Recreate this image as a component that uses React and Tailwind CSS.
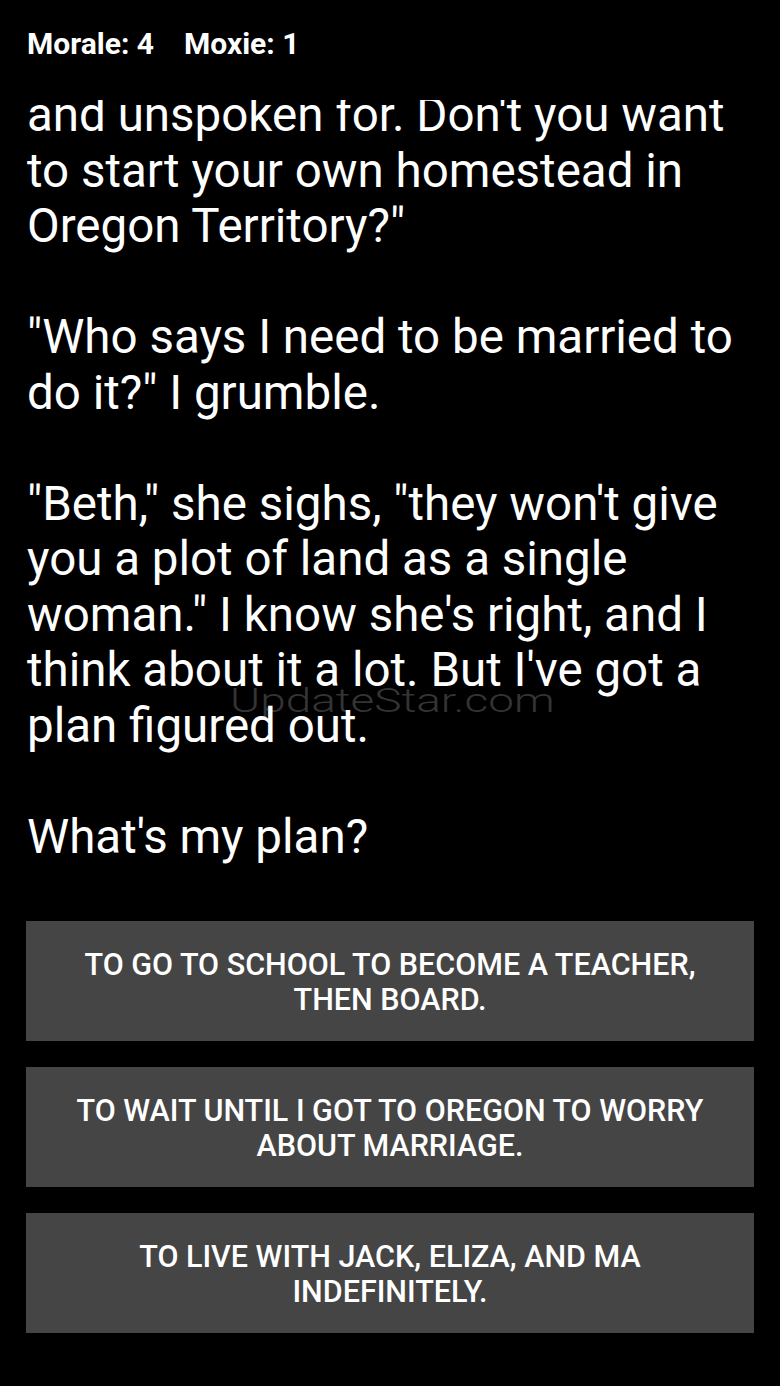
import React from 'react';

const story = [
  ['and unspoken for. Don\'t you want', 'to start your own homestead in', 'Oregon Territory?"'],
  ['"Who says I need to be married to', 'do it?" I grumble.'],
  ['"Beth," she sighs, "they won\'t give', 'you a plot of land as a single', 'woman." I know she\'s right, and I', 'think about it a lot. But I\'ve got a', 'plan figured out.'],
  ['What\'s my plan?'],
];

const choices = [
  ['TO GO TO SCHOOL TO BECOME A TEACHER,', 'THEN BOARD.'],
  ['TO WAIT UNTIL I GOT TO OREGON TO WORRY', 'ABOUT MARRIAGE.'],
  ['TO LIVE WITH JACK, ELIZA, AND MA', 'INDEFINITELY.'],
];

export default function App() {
  return (
    <div
      className="w-[780px] h-[1386px] bg-black text-white overflow-hidden relative"
      style={{ fontFamily: 'Roboto, "Noto Sans", sans-serif' }}
    >
      {/* watermark, sits behind the story text */}
      <div className="absolute left-[230px] top-[683px] text-[34px] leading-[34px] font-light text-[#343434] origin-left scale-x-[1.35] pointer-events-none">
        UpdateStar.com
      </div>

      {/* Stats */}
      <div className="relative h-[100px] px-[27px] pt-[29px] flex gap-[30px] text-[30px] leading-[30px] font-bold">
        <span>Morale: 4</span>
        <span>Moxie: 1</span>
      </div>

      <div className="relative h-[1286px] overflow-hidden">
        <div className="-mt-[12px] px-[27px] text-[47.5px] leading-[55.5px] whitespace-nowrap">
          {story.map((para, i) => (
            <p key={i} className={i > 0 ? 'mt-[55.5px]' : ''}>
              {para.map((line, j) => (
                <span key={j} className="block">{line}</span>
              ))}
            </p>
          ))}
        </div>

        <div className="mt-[56px] px-[26px] flex flex-col gap-[26px]">
          {choices.map((c, i) => (
            <button
              key={i}
              className="h-[120px] w-full bg-[#454545] flex flex-col items-center justify-center pt-[2px] text-[30.5px] leading-[35px] font-medium text-white"
            >
              {c.map((l, j) => <span key={j}>{l}</span>)}
            </button>
          ))}
        </div>
      </div>
    </div>
  );
}
